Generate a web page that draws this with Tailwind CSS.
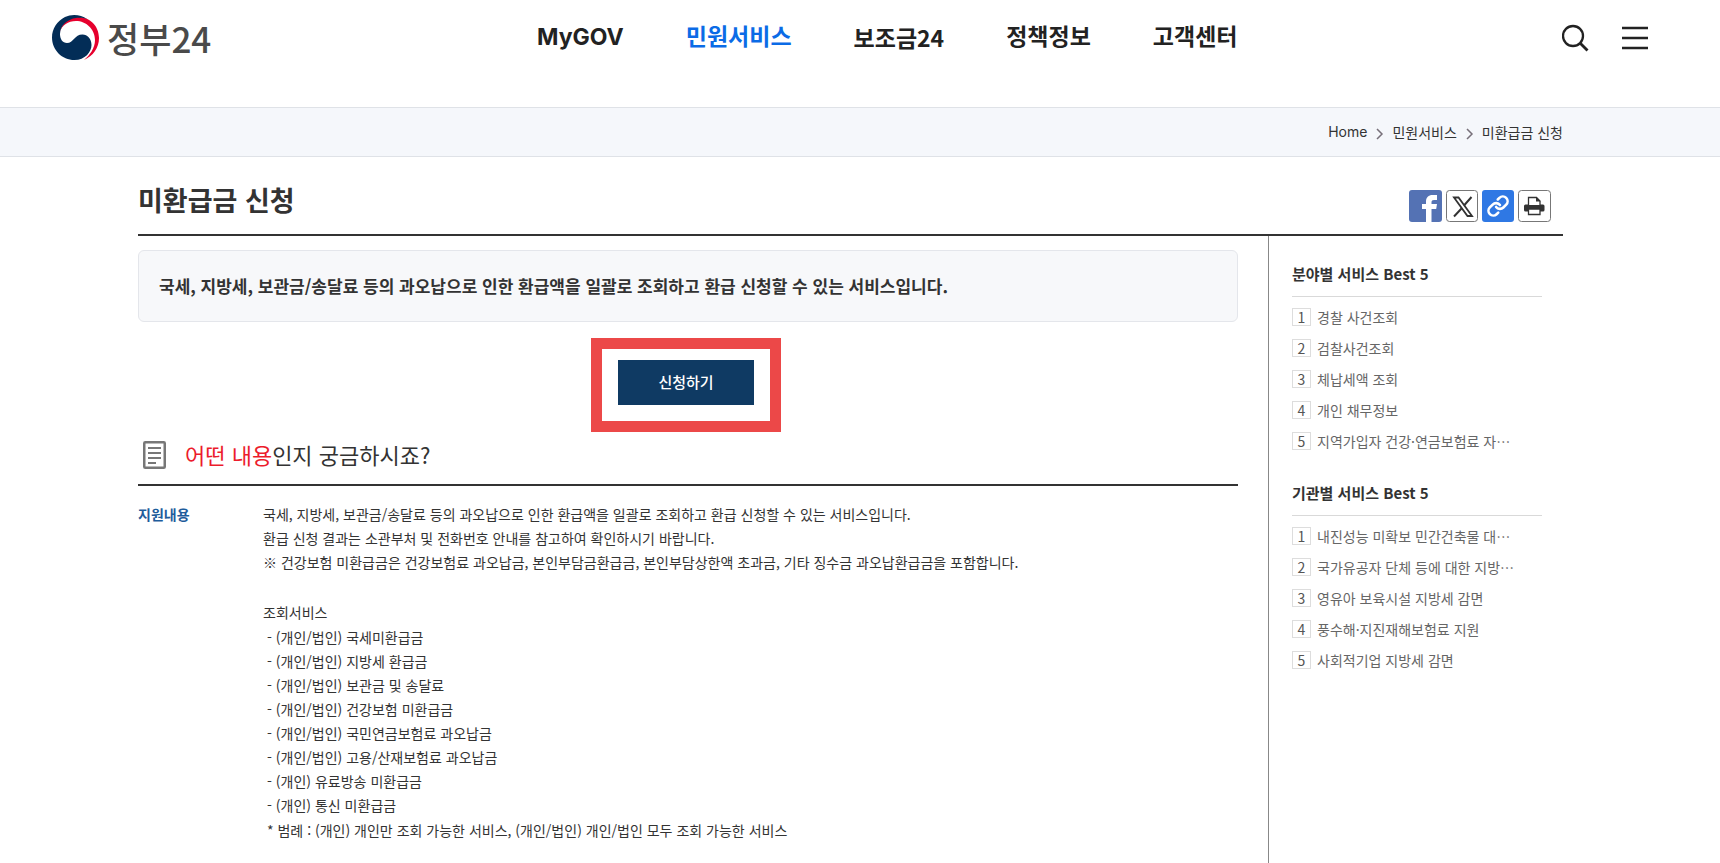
<!DOCTYPE html>
<html lang="ko">
<head>
    <meta charset="UTF-8">
    <meta name="viewport" content="width=device-width, initial-scale=1.0">
    <title>미환급금 신청 | 정부24</title>
    <script src="https://cdn.jsdelivr.net/npm/@tailwindcss/browser@4"></script>
</head>
<body class="flex h-screen flex-col overflow-hidden bg-white font-['Noto_Sans_CJK_KR',sans-serif] text-sm text-[#333]">
    <!-- Header -->
    <header class="flex h-[107px] shrink-0 items-start justify-between pl-[52px] pr-[72px]">
        <a href="#" class="flex h-[74px] w-[485px] items-center gap-2">
            <svg class="size-[47px]" viewBox="0 0 47 47" aria-hidden="true">
                <path fill="#e6002d" d="M8 18C9 9 17 3.500 26 3C38 3 47 12 47 24C47 34 41 42 32 46C38 41 43 34 43 26C43 15 34 7 24 7C16 7 10 11 8 18Z"/>
                <path fill="#032d57" d="M35 5C29 0.500 20 -0.500 13 3C5 7 0 15 0 23.500C0 36 10 46 22.500 46C33 46 39.500 38 39.500 31C39.500 25 35.500 20.500 30.500 20.500C22.500 20.500 21.500 29 15 29C10.500 29 8 25 8 20C8 11 16 5 24 4C28 3.500 32 4 35 5Z"/>
            </svg>
            <span class="text-[35px] font-medium leading-none text-[#4a4a4a]">정부24</span>
        </a>
        <nav class="flex h-[74px] flex-1 items-center gap-[62px] whitespace-nowrap font-['Inter','Noto_Sans_CJK_KR',sans-serif] text-[23px] font-bold text-[#222]">
            <a href="#">MyGOV</a>
            <a href="#" class="text-[#0b6be6]">민원서비스</a>
            <a href="#" class="font-['Noto_Sans_CJK_KR',sans-serif]">보조금24</a>
            <a href="#">정책정보</a>
            <a href="#">고객센터</a>
        </nav>
        <div class="flex h-[76px] items-center gap-8">
            <button type="button" aria-label="검색">
                <svg class="size-7" viewBox="0 0 28 28" fill="none" stroke="#222" stroke-width="2.300">
                    <circle cx="11" cy="12" r="10"/>
                    <path stroke-width="2.800" d="M18 19L25.500 26.500"/>
                </svg>
            </button>
            <button type="button" aria-label="전체메뉴">
                <svg class="h-7 w-[26px]" viewBox="0 0 26 28" fill="none" stroke="#222" stroke-width="2.400">
                    <path d="M0 4H26M0 14H26M0 24H26"/>
                </svg>
            </button>
        </div>
    </header>

    <!-- Breadcrumb -->
    <div class="flex h-[50px] shrink-0 items-center justify-end gap-2 border-y border-[#dfe2e7] bg-[#f5f7fb] pr-[157px] pb-px">
        <a href="#" class="font-['Inter',sans-serif]">Home</a>
        <svg class="mt-1 h-3 w-[9px]" viewBox="0 0 9 12" fill="none" stroke="#77707a" stroke-width="1.500"><path d="M2 1L7 6L2 11"/></svg>
        <a href="#">민원서비스</a>
        <svg class="mt-1 h-3 w-[9px]" viewBox="0 0 9 12" fill="none" stroke="#77707a" stroke-width="1.500"><path d="M2 1L7 6L2 11"/></svg>
        <a href="#">미환급금 신청</a>
    </div>

    <main class="flex min-h-0 flex-1 flex-col pl-[138px] pr-[157px]">
        <!-- Title -->
        <div class="flex h-[79px] shrink-0 items-end justify-between border-b-2 border-[#333] pr-3 pb-3">
            <h1 class="pb-1 text-[27px] font-bold leading-9">미환급금 신청</h1>
            <div class="flex gap-1">
                <button type="button" aria-label="페이스북 공유">
                    <svg class="h-8 w-[33px]" viewBox="0 0 33 32">
                        <rect width="33" height="32" rx="3" fill="#5472b4"/>
                        <path fill="#fff" d="M17 32V19H13V14H17V11.500C17 7.500 19.500 5 23.500 5H28V10H25C23.300 10 22.500 10.800 22.500 12.300V14H28L27.200 19H22.500V32Z"/>
                    </svg>
                </button>
                <button type="button" aria-label="X 공유">
                    <svg class="size-8" viewBox="0 0 32 32">
                        <rect x="0.500" y="0.500" width="31" height="31" rx="3" fill="#fff" stroke="#777"/>
                        <path fill="none" stroke="#333" stroke-width="1.800" d="M8 7.500H12.500L26 26H21.500Z"/>
                        <path fill="none" stroke="#333" stroke-width="2" d="M25.500 7L18 15.500M15.500 18.500L8 26.500"/>
                    </svg>
                </button>
                <button type="button" aria-label="링크 복사">
                    <svg class="size-8" viewBox="0 0 32 32">
                        <rect width="32" height="32" rx="3" fill="#2f78e4"/>
                        <g fill="none" stroke="#fff" stroke-width="2.700" stroke-linecap="round" transform="translate(4.500 4.500) scale(0.960)">
                            <path d="M10 13a5 5 0 0 0 7.540.540l3-3a5 5 0 0 0-7.070-7.070l-1.720 1.710"/>
                            <path d="M14 11a5 5 0 0 0-7.540-.540l-3 3a5 5 0 0 0 7.070 7.070l1.710-1.710"/>
                        </g>
                    </svg>
                </button>
                <button type="button" aria-label="인쇄">
                    <svg class="h-8 w-[33px]" viewBox="0 0 33 32">
                        <rect x="0.500" y="0.500" width="32" height="31" rx="3" fill="#fff" stroke="#777"/>
                        <rect x="6" y="14.500" width="20.500" height="7" rx="1.500" fill="#333"/>
                        <path fill="#fff" stroke="#333" stroke-width="1.300" d="M10.500 15V7.500H18.500L22 11V15"/>
                        <path fill="#333" d="M18 7L22.500 11.500H18Z"/>
                        <path fill="#fff" stroke="#333" stroke-width="1.300" d="M10.500 19H22V24.500H10.500Z"/>
                    </svg>
                </button>
            </div>
        </div>

        <div class="flex min-h-0 flex-1">
            <!-- Content -->
            <section class="flex-1 pt-[14px] pr-[30px]">
                <p class="flex h-[72px] items-center rounded-md border border-[#e4e6eb] bg-[#f7f8fa] px-5 text-[17px] font-bold">국세, 지방세, 보관금/송달료 등의 과오납으로 인한 환급액을 일괄로 조회하고 환급 신청할 수 있는 서비스입니다.</p>

                <div class="flex justify-center pt-[38px] pr-1">
                    <div class="relative">
                        <button type="button" class="block h-[45px] w-[136px] bg-[#0f3a63] pb-0.5 text-[15px] font-medium text-white">신청하기</button>
                        <div class="pointer-events-none absolute -inset-x-[27px] -top-[22px] -bottom-[27px] border-[11px] border-[#ec4848]"></div>
                    </div>
                </div>

                <h2 class="mt-5 flex h-[61px] items-center gap-[19px] border-b-2 border-[#333] pl-[5px] text-[22px] font-normal">
                    <svg class="h-7 w-[23px]" viewBox="0 0 23 28" fill="none" stroke="#777" stroke-width="2.500" aria-hidden="true">
                        <rect x="1.250" y="1.250" width="20.500" height="25.500" rx="1"/>
                        <path stroke-width="2" d="M5 7H18M5 12H18M5 17H18M5 22H13"/>
                    </svg>
                    <span><em class="not-italic text-[#ec1c2c]">어떤 내용</em>인지 궁금하시죠?</span>
                </h2>

                <dl class="flex pt-4 leading-6">
                    <dt class="w-[125px] shrink-0 font-bold text-[#1e5c9b]">지원내용</dt>
                    <dd>
                        <p>국세, 지방세, 보관금/송달료 등의 과오납으로 인한 환급액을 일괄로 조회하고 환급 신청할 수 있는 서비스입니다.</p>
                        <p>환급 신청 결과는 소관부처 및 전화번호 안내를 참고하여 확인하시기 바랍니다.</p>
                        <p>※ 건강보험 미환급금은 건강보험료 과오납금, 본인부담금환급금, 본인부담상한액 초과금, 기타 징수금 과오납환급금을 포함합니다.</p>
                        <p class="mt-[26px]">조회서비스</p>
                        <ul class="my-px pl-1">
                            <li>- (개인/법인) 국세미환급금</li>
                            <li>- (개인/법인) 지방세 환급금</li>
                            <li>- (개인/법인) 보관금 및 송달료</li>
                            <li>- (개인/법인) 건강보험 미환급금</li>
                            <li>- (개인/법인) 국민연금보험료 과오납금</li>
                            <li>- (개인/법인) 고용/산재보험료 과오납금</li>
                            <li>- (개인) 유료방송 미환급금</li>
                            <li>- (개인) 통신 미환급금</li>
                        </ul>
                        <p class="pl-1">* 범례 : (개인) 개인만 조회 가능한 서비스, (개인/법인) 개인/법인 모두 조회 가능한 서비스</p>
                    </dd>
                </dl>
            </section>

            <!-- Sidebar -->
            <aside class="w-[295px] shrink-0 border-l border-[#888] pt-[26px] pr-[21px] pl-[23px]">
                <h3 class="h-[35px] border-b border-[#d9d9d9] text-[15px] font-bold leading-6">분야별 서비스 Best 5</h3>
                <ol class="mt-2 mb-7 flex flex-col gap-[7px] leading-6 text-[#666]">
                    <li><a href="#" class="flex items-center gap-[6px]"><span class="h-[18px] w-[19px] border border-[#ddd] text-center leading-4 text-[#555]">1</span>경찰 사건조회</a></li>
                    <li><a href="#" class="flex items-center gap-[6px]"><span class="h-[18px] w-[19px] border border-[#ddd] text-center leading-4 text-[#555]">2</span>검찰사건조회</a></li>
                    <li><a href="#" class="flex items-center gap-[6px]"><span class="h-[18px] w-[19px] border border-[#ddd] text-center leading-4 text-[#555]">3</span>체납세액 조회</a></li>
                    <li><a href="#" class="flex items-center gap-[6px]"><span class="h-[18px] w-[19px] border border-[#ddd] text-center leading-4 text-[#555]">4</span>개인 채무정보</a></li>
                    <li><a href="#" class="flex items-center gap-[6px]"><span class="h-[18px] w-[19px] border border-[#ddd] text-center leading-4 text-[#555]">5</span>지역가입자 건강·연금보험료 자⋯</a></li>
                </ol>
                <h3 class="h-[35px] border-b border-[#d9d9d9] text-[15px] font-bold leading-6">기관별 서비스 Best 5</h3>
                <ol class="mt-2 flex flex-col gap-[7px] leading-6 text-[#666]">
                    <li><a href="#" class="flex items-center gap-[6px]"><span class="h-[18px] w-[19px] border border-[#ddd] text-center leading-4 text-[#555]">1</span>내진성능 미확보 민간건축물 대⋯</a></li>
                    <li><a href="#" class="flex items-center gap-[6px]"><span class="h-[18px] w-[19px] border border-[#ddd] text-center leading-4 text-[#555]">2</span>국가유공자 단체 등에 대한 지방⋯</a></li>
                    <li><a href="#" class="flex items-center gap-[6px]"><span class="h-[18px] w-[19px] border border-[#ddd] text-center leading-4 text-[#555]">3</span>영유아 보육시설 지방세 감면</a></li>
                    <li><a href="#" class="flex items-center gap-[6px]"><span class="h-[18px] w-[19px] border border-[#ddd] text-center leading-4 text-[#555]">4</span>풍수해·지진재해보험료 지원</a></li>
                    <li><a href="#" class="flex items-center gap-[6px]"><span class="h-[18px] w-[19px] border border-[#ddd] text-center leading-4 text-[#555]">5</span>사회적기업 지방세 감면</a></li>
                </ol>
            </aside>
        </div>
    </main>
</body>
</html>
